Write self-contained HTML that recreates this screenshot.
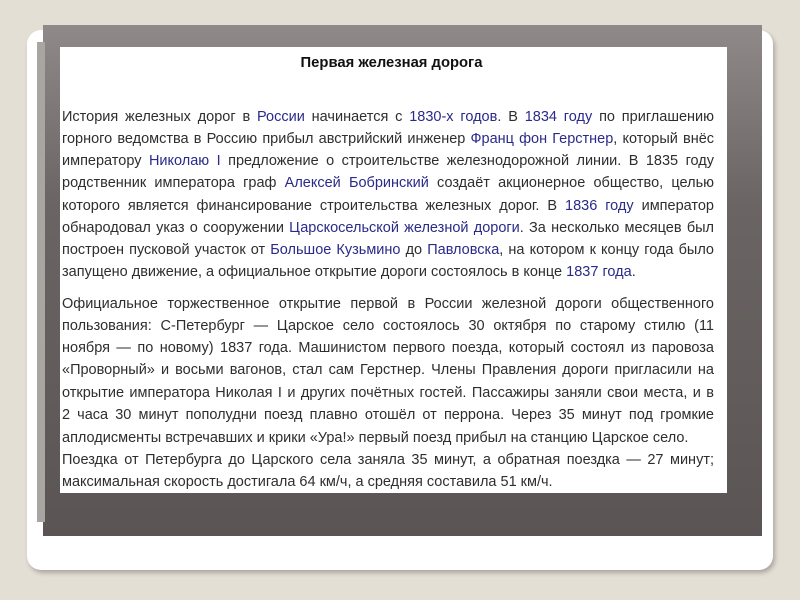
<!DOCTYPE html>
<html><head><meta charset="utf-8"><style>
html,body{margin:0;padding:0;width:800px;height:600px;overflow:hidden;background:#e4dfd5;}
.panel{position:absolute;left:27px;top:30px;width:746px;height:540px;background:#fff;border-radius:14px;box-shadow:2px 3px 5px rgba(0,0,0,0.25);}
.dark{position:absolute;left:43px;top:25px;width:719px;height:511px;background:linear-gradient(180deg,#8f8a89 0%,#6a6564 35%,#5a5554 100%);}
.band{position:absolute;left:37px;top:42px;width:8px;height:480px;background:#a9a5a3;}
.content{position:absolute;left:60px;top:47px;width:667px;height:446px;background:#fff;}
.t{position:absolute;left:-2px;width:667px;text-align:center;top:8px;font:bold 14.8px "Liberation Sans",sans-serif;color:#111;}
.l{position:absolute;left:2px;width:652px;font:14.5px "Liberation Sans",sans-serif;color:#2e2e2e;white-space:nowrap;text-align:justify;text-align-last:justify;line-height:18px;margin-top:2px;}
.l.s{text-align-last:left;}
a{color:#2a2a8a;text-decoration:none;}
</style></head><body>
<div class="panel"></div>
<div class="dark"></div>
<div class="band"></div>
<div class="content">
<div class="t">Первая железная дорога</div>
<div class="l" style="top:59px">История железных дорог в <a>России</a> начинается с <a>1830-х годов</a>. В <a>1834 году</a> по приглашению</div>
<div class="l" style="top:81px">горного ведомства в Россию прибыл австрийский инженер <a>Франц фон Герстнер</a>, который внёс</div>
<div class="l" style="top:103px">императору <a>Николаю I</a> предложение о строительстве железнодорожной линии. В 1835 году</div>
<div class="l" style="top:125px">родственник императора граф <a>Алексей Бобринский</a> создаёт акционерное общество, целью</div>
<div class="l" style="top:148px">которого является финансирование строительства железных дорог. В <a>1836 году</a> император</div>
<div class="l" style="top:170px">обнародовал указ о сооружении <a>Царскосельской железной дороги</a>. За несколько месяцев был</div>
<div class="l" style="top:192px">построен пусковой участок от <a>Большое Кузьмино</a> до <a>Павловска</a>, на котором к концу года было</div>
<div class="l s" style="top:214px">запущено движение, а официальное открытие дороги состоялось в конце <a>1837 года</a>.</div>
<div class="l" style="top:246px">Официальное торжественное открытие первой в России железной дороги общественного</div>
<div class="l" style="top:268px">пользования: С-Петербург — Царское село состоялось 30 октября по старому стилю (11</div>
<div class="l" style="top:290px">ноября — по новому) 1837 года. Машинистом первого поезда, который состоял из паровоза</div>
<div class="l" style="top:312px">«Проворный» и восьми вагонов, стал сам Герстнер. Члены Правления дороги пригласили на</div>
<div class="l" style="top:335px">открытие императора Николая I и других почётных гостей. Пассажиры заняли свои места, и в</div>
<div class="l" style="top:357px">2 часа 30 минут пополудни поезд плавно отошёл от перрона. Через 35 минут под громкие</div>
<div class="l s" style="top:380px">аплодисменты встречавших и крики «Ура!» первый поезд прибыл на станцию Царское село.</div>
<div class="l" style="top:402px">Поездка от Петербурга до Царского села заняла 35 минут, а обратная поездка — 27 минут;</div>
<div class="l s" style="top:424px">максимальная скорость достигала 64 км/ч, а средняя составила 51 км/ч.</div>
</div>
</body></html>
